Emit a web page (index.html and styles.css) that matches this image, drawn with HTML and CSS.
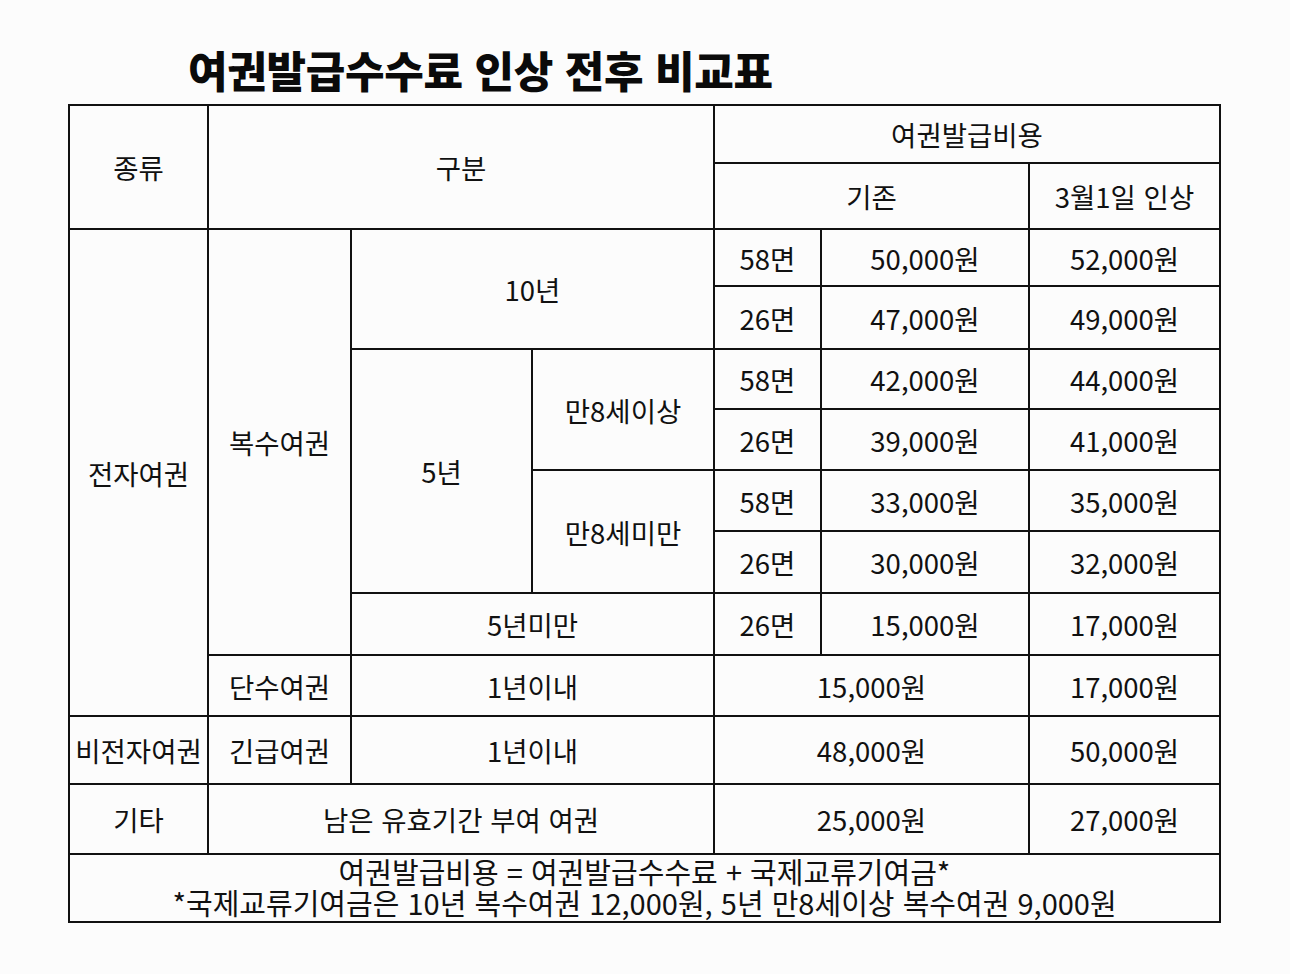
FILE: index.html
```html
<!DOCTYPE html>
<html lang="ko">
<head>
<meta charset="utf-8">
<title>여권발급수수료 인상 전후 비교표</title>
<link rel="stylesheet" href="styles.css">
</head>
<body>
<div class="page">
  <h1 class="title">여권발급수수료 인상 전후 비교표</h1>
  <table class="fee-table">
    <colgroup>
      <col class="c1"><col class="c2"><col class="c3"><col class="c4"><col class="c5"><col class="c6"><col class="c7">
    </colgroup>
    <tr class="h1">
      <td rowspan="2">종류</td>
      <td colspan="3" rowspan="2">구분</td>
      <td colspan="3">여권발급비용</td>
    </tr>
    <tr class="h2">
      <td colspan="2">기존</td>
      <td>3월1일 인상</td>
    </tr>
    <tr class="r1">
      <td rowspan="8">전자여권</td>
      <td rowspan="7">복수여권</td>
      <td colspan="2" rowspan="2">10년</td>
      <td>58면</td><td>50,000원</td><td>52,000원</td>
    </tr>
    <tr class="r2">
      <td>26면</td><td>47,000원</td><td>49,000원</td>
    </tr>
    <tr class="r3">
      <td rowspan="4">5년</td>
      <td rowspan="2">만8세이상</td>
      <td>58면</td><td>42,000원</td><td>44,000원</td>
    </tr>
    <tr class="r4">
      <td>26면</td><td>39,000원</td><td>41,000원</td>
    </tr>
    <tr class="r5">
      <td rowspan="2">만8세미만</td>
      <td>58면</td><td>33,000원</td><td>35,000원</td>
    </tr>
    <tr class="r6">
      <td>26면</td><td>30,000원</td><td>32,000원</td>
    </tr>
    <tr class="r7">
      <td colspan="2">5년미만</td>
      <td>26면</td><td>15,000원</td><td>17,000원</td>
    </tr>
    <tr class="r8">
      <td>단수여권</td>
      <td colspan="2">1년이내</td>
      <td colspan="2">15,000원</td><td>17,000원</td>
    </tr>
    <tr class="r9">
      <td>비전자여권</td>
      <td>긴급여권</td>
      <td colspan="2">1년이내</td>
      <td colspan="2">48,000원</td><td>50,000원</td>
    </tr>
    <tr class="r10">
      <td>기타</td>
      <td colspan="3">남은 유효기간 부여 여권</td>
      <td colspan="2">25,000원</td><td>27,000원</td>
    </tr>
    <tr class="r11">
      <td colspan="7" class="note">여권발급비용 = 여권발급수수료 + 국제교류기여금*<br>*국제교류기여금은 10년 복수여권 12,000원, 5년 만8세이상 복수여권 9,000원</td>
    </tr>
  </table>
</div>
</body>
</html>
```

FILE: styles.css
```css
html, body {
  margin: 0;
  padding: 0;
  background: #fcfcfc;
}

body {
  font-family: "Noto Sans CJK KR", "Noto Sans", sans-serif;
  color: #111;
}

.page {
  padding-left: 68px;
  width: 1151px;
}

.title {
  margin: 0;
  padding: 44px 0 10px 120px;
  height: 50px;
  line-height: 50px;
  font-size: 43px;
  font-weight: 900;
  letter-spacing: -0.3px;
  color: #0a0a0a;
}

.fee-table {
  border-collapse: collapse;
  table-layout: fixed;
  width: 1151px;
  border: 2px solid #111;
}

.fee-table td {
  border: 2px solid #111;
  padding: 0;
  text-align: center;
  vertical-align: middle;
  font-size: 27.5px;
  line-height: 32px;
  white-space: nowrap;
}

.c1 { width: 139px; }
.c2 { width: 143px; }
.c3 { width: 181px; }
.c4 { width: 182px; }
.c5 { width: 107px; }
.c6 { width: 208px; }
.c7 { width: 191px; }

.h1 { height: 58px; }
.h2 { height: 66px; }
.r1 { height: 57px; }
.r2 { height: 63px; }
.r3 { height: 60px; }
.r4 { height: 61px; }
.r5 { height: 61px; }
.r6 { height: 62px; }
.r7 { height: 62px; }
.r8 { height: 61px; }
.r9 { height: 68px; }
.r10 { height: 70px; }
.r11 { height: 68px; }

.fee-table td.note {
  font-size: 29px;
  line-height: 31px;
  padding-bottom: 2px;
}
```
